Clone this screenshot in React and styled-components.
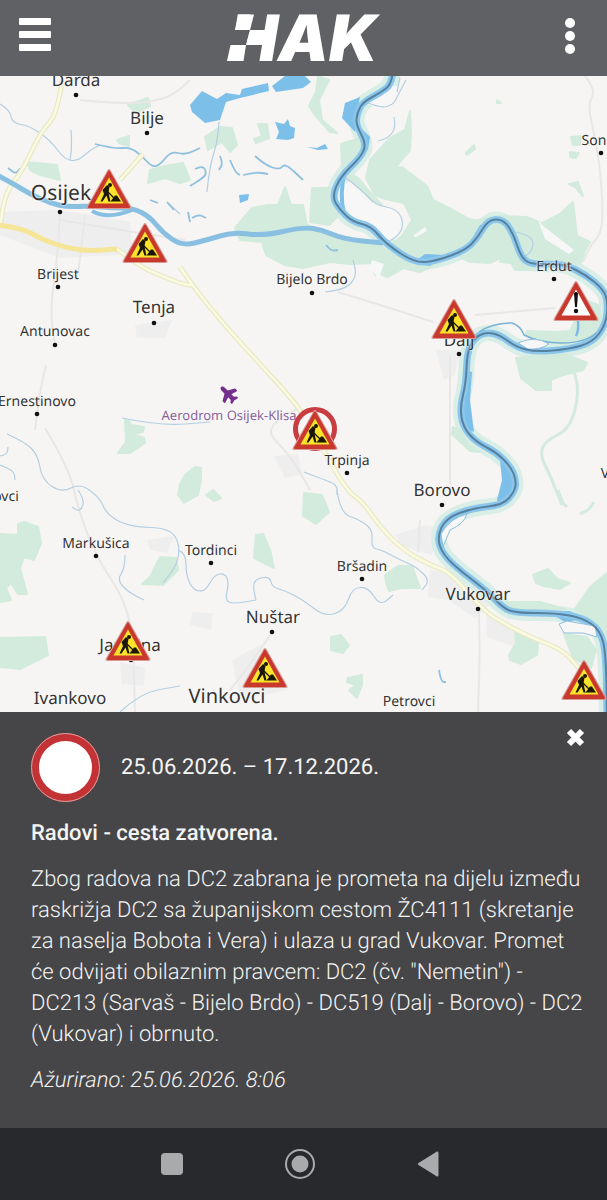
import React from 'react'
import styled, { createGlobalStyle } from 'styled-components'
import { FaPlane } from 'react-icons/fa'

const MAP = { top: 76, width: 607, height: 636 }

const GlobalStyle = createGlobalStyle`
    * {
        box-sizing: border-box;
    }
    body {
        margin: 0;
        background: #464648;
        font-family: Roboto, sans-serif;
        text-rendering: geometricPrecision;
    }
`

const Page = styled.div`
    display: flex;
    flex-direction: column;
    min-height: 100vh;
`

const IconButton = styled.button`
    display: flex;
    align-items: center;
    justify-content: center;
    padding: 0;
    border: 0;
    background: none;
    color: inherit;
    cursor: pointer;
`

const TopBar = styled.header`
    display: flex;
    align-items: center;
    justify-content: space-between;
    height: 76px;
    padding: 0 18px 4px;
    background: #606165;
    color: #fff;
`

const MapArea = styled.main`
    position: relative;
    width: 100%;
    aspect-ratio: ${MAP.width} / ${MAP.height};
    overflow: hidden;
    background: #f6f5f4;
`

const Terrain = styled.svg`
    display: block;
    width: 100%;
    height: 100%;
`

const spot = ({ $x, $y }) => ({
    style: {
        left: `${($x / MAP.width) * 100}%`,
        top: `${(($y - MAP.top) / MAP.height) * 100}%`,
    },
})

const Place = styled.span.attrs(spot)`
    position: absolute;
    transform: translate(-50%, -50%);
    font-family: 'Noto Sans', sans-serif;
    font-size: ${({ $size }) => $size}px;
    line-height: 24px;
    white-space: nowrap;
    color: ${({ $color }) => $color || '#333'};
    text-shadow: 0 0 2px #fff, 0 0 2px #fff;
`

const Marker = styled(IconButton).attrs(spot)`
    position: absolute;
    transform: translate(-50%, -50%);
`

const Airport = styled.span.attrs(spot)`
    position: absolute;
    display: flex;
    transform: translate(-50%, -50%) rotate(225deg);
    color: #73308a;
`

const Panel = styled.section`
    display: flex;
    flex: 1;
    flex-direction: column;
    padding: 12px 15px 32px 31px;
    background: #464648;
    color: #f4f4f4;
`

const PanelHead = styled.div`
    display: flex;
    align-items: flex-start;
    justify-content: space-between;
`

const Period = styled.div`
    display: flex;
    align-items: center;
    gap: 21px;
    padding-top: 9px;
    font-size: 22px;
    line-height: 30px;
`

const ClosedSign = styled.span`
    width: 69px;
    height: 69px;
    border: 8px solid #c33335;
    border-radius: 50%;
    outline: 1px solid #d8a3a3;
    outline-offset: -1px;
    background: #fff;
`

const Title = styled.h1`
    margin: 16px 0 0;
    font-size: 22px;
    font-weight: 500;
    line-height: 31px;
`

const Text = styled.p`
    margin: 15px 0 0;
    font-size: 22px;
    font-weight: 300;
    line-height: 31px;
`

const Updated = styled(Text)`
    font-style: italic;
`

const SystemBar = styled.nav`
    display: flex;
    align-items: center;
    justify-content: center;
    gap: 96px;
    height: 72px;
    padding-right: 7px;
    background: #28292d;
    color: #a9aaac;
`

const places = [
    { name: 'Darda', x: 76, y: 80, size: 17, dot: [76, 95] },
    { name: 'Bilje', x: 147, y: 118, size: 17, dot: [147, 133] },
    { name: 'Osijek', x: 61, y: 193, size: 21, dot: [60, 212] },
    { name: 'Brijest', x: 58, y: 275, size: 14, dot: [58, 287] },
    { name: 'Tenja', x: 154, y: 307, size: 17, dot: [154, 323] },
    { name: 'Antunovac', x: 55, y: 332, size: 14, dot: [55, 345] },
    { name: 'Bijelo Brdo', x: 312, y: 280, size: 14, dot: [312, 293] },
    { name: 'Erdut', x: 554, y: 267, size: 14, dot: [554, 279] },
    { name: 'Son', x: 594, y: 141, size: 14, dot: [601, 153] },
    { name: 'Dalj', x: 459, y: 340, size: 17, dot: [459, 354] },
    { name: 'Ernestinovo', x: 37, y: 402, size: 14, dot: [37, 414] },
    { name: 'Aerodrom Osijek-Klisa', x: 229, y: 415, size: 13, color: '#87619a' },
    { name: 'Trpinja', x: 347, y: 461, size: 14, dot: [347, 473] },
    { name: 'Borovo', x: 442, y: 490, size: 17, dot: [442, 505] },
    { name: 'ovci', x: 6, y: 497, size: 14 },
    { name: 'V', x: 605, y: 474, size: 14 },
    { name: 'Markušica', x: 96, y: 544, size: 14, dot: [96, 556] },
    { name: 'Tordinci', x: 211, y: 551, size: 14, dot: [211, 563] },
    { name: 'Bršadin', x: 362, y: 567, size: 14, dot: [362, 579] },
    { name: 'Vukovar', x: 478, y: 594, size: 17, dot: [478, 609] },
    { name: 'Nuštar', x: 273, y: 617, size: 17, dot: [272, 632] },
    { name: 'Jarmina', x: 130, y: 645, size: 17, dot: [131, 660] },
    { name: 'Ivankovo', x: 70, y: 698, size: 17 },
    { name: 'Vinkovci', x: 227, y: 696, size: 20 },
    { name: 'Petrovci', x: 409, y: 702, size: 14 },
]

const markers = [
    { x: 109, y: 189 },
    { x: 145, y: 243 },
    { x: 454, y: 319 },
    { x: 576, y: 301, kind: 'warning' },
    { x: 315, y: 430, kind: 'closed' },
    { x: 128, y: 641 },
    { x: 265, y: 668 },
    { x: 584, y: 680 },
]

const danube =
    '393,70 392,84 380,93 363,102 357,113 356,125 366,143 362,156 340,177 332,197 340,210 353,222 371,226 386,244 415,263 436,261 466,250 478,237 488,220 503,219 513,233 521,257 530,264 550,264 566,265 586,275 603,289 608,302 606,324 593,342 570,349 536,352 516,347 500,335 486,332 474,338 467,353 466,383 460,407 463,427 476,442 496,452 511,467 516,480 515,491 503,505 473,508 446,518 437,537 443,555 463,573 486,590 503,608 516,613 556,613 583,618 600,630 606,653 607,720'
const drava =
    '-5,174 12,183 30,194 50,203 67,207 90,206 112,208 133,208 150,217 163,233 182,246 207,240 233,232 263,236 303,227 323,230 343,239 383,243'

const forests = [
    '410,111 411,132 410,150 395,168 402,167 427,186 433,200 447,207 469,219 485,222 460,226 431,228 412,220 404,203 385,199 375,195 366,178 370,160 390,138 405,130',
    '388,246 402,236 412,220 436,225 458,225 486,218 500,216 526,217 540,222 554,236 576,250 586,256 580,264 552,262 530,270 515,270 507,255 490,263 470,262 455,255 420,272 402,268 388,250',
    '537,226 560,214 573,202 577,236 590,242 582,256 565,248',
    '252,208 268,205 278,205 285,187 291,205 303,205 307,225 340,236 380,244 402,269 388,277 375,275 372,263 350,264 330,262 303,268 285,265 266,255 262,242 240,240 235,228',
    '150,170 165,166 183,163 190,180 180,183 165,178 148,183',
    '27,162 57,165 60,180 40,175 30,170',
    '117,140 129,136 129,146 119,143',
    '128,105 148,98 150,106 136,113',
    '205,137 220,127 232,128 237,145 230,152 222,142 208,150',
    '258,124 267,124 269,138 256,143 254,139 262,136',
    '312,188 334,188 338,216 329,225 310,222',
    '341,144 363,137 362,156 346,170 358,178 368,190 382,205 372,199 353,183 342,168',
    '318,76 329,80 319,100 322,120 337,133 330,132 315,115 309,106 316,92',
    '125,420 129,421 131,425 144,427 143,432 133,434 144,438 145,443 130,453 118,453 126,442',
    '185,475 195,467 201,468 201,480 198,495 184,503 178,495 180,484',
    '206,495 213,490 221,498 214,501',
    '304,493 322,495 329,512 316,524 303,516',
    '0,534 18,535 18,524 24,522 38,527 41,543 34,560 24,557 20,568 27,594 18,594 11,583 6,588 11,600 0,602',
    '0,638 45,637 48,655 20,669 0,667',
    '160,557 176,558 178,570 163,585 142,584 150,577',
    '256,535 263,534 270,550 274,568 254,558',
    '385,575 398,566 412,566 420,588 401,588 389,591 386,583',
    '331,637 341,635 349,645 343,653 331,650',
    '348,678 362,675 362,685 357,698 349,690 356,685 347,682',
    '509,655 516,643 515,631 526,636 538,642 537,655 521,664 510,660',
    '516,358 535,356 565,354 587,363 583,370 560,376 551,380 551,390 536,390 521,378',
    '527,331 555,332 570,331 585,300 598,305 603,330 588,348 545,341 525,335',
    '590,587 607,573 607,640 596,622 575,609',
    '533,575 548,569 557,579 570,583 560,589 544,586 536,583',
    '564,634 587,637 596,650 591,668 573,658',
    '505,602 540,602 565,609 555,613 518,611',
    '453,427 460,430 468,445 480,452 470,451 452,434',
    '487,235 500,240 505,250 500,262 520,264 512,250 520,234',
    '497,100 501,103 497,103',
    '466,153 474,145 475,149 467,155',
    '571,137 581,136 580,145 573,145',
    '570,152 579,153 576,158 570,157',
    '569,184 578,182 583,196 575,187',
]

const fields = [
    '0,212 55,210 85,214 130,222 133,250 116,255 60,258 0,235',
    '135,325 172,320 165,338 137,338',
    '274,456 298,454 302,474 285,478',
    '395,535 426,525 439,528 432,555 404,547',
    '430,570 458,572 490,605 475,618 448,600 428,597',
    '486,615 503,620 520,638 515,647 487,637',
    '192,612 213,613 211,630 190,625',
    '147,540 174,536 167,553 150,550',
    '232,660 260,645 288,690 240,700',
    '120,662 145,668 144,686 122,684',
    '436,350 460,350 455,375 444,380',
]

const lakes = [
    '190,105 202,91 217,99 226,93 240,95 242,89 268,83 269,91 240,98 226,102 220,120 205,123 192,112',
    '272,86 285,76 305,76 311,82 303,88 276,92',
    '275,122 284,124 288,119 290,126 295,128 294,138 288,140 276,139 279,132',
    '239,195 249,194 248,200 240,203',
    '360,97 345,103 342,118 355,132 357,112',
    '362,129 370,137 368,150 362,148',
    '514,475 512,494 500,508 497,500 502,480 500,460',
    '413,263 425,254 446,255 430,266',
    '467,247 480,225 486,224 474,244',
    '548,612 565,622 583,619 570,611',
    '466,370 472,372 470,400 474,432 464,428 460,408',
    '307,147 317,148 325,144 328,149 318,150',
]

const streams = [
    '0,104 10,110 12,123 30,126 50,140 65,160 78,161 90,150 100,145',
    '70,160 72,150 71,130',
    '219,122 218,140 210,165 207,192',
    '366,102 380,108 393,105 398,95 406,80',
    '397,92 400,78',
    '394,117 396,128 388,138 378,141',
    '168,203 180,214',
    '7,434 25,442 38,455 42,480 62,493 80,483 100,498 107,515 130,527 170,528 180,545 177,565 163,583',
    '78,490 85,500 80,512 72,507',
    '0,456 7,455 8,447',
    '0,465 14,470 15,480',
    '178,550 186,553 186,575 193,590 205,592 214,575 225,573 229,583 225,600 233,604 256,600',
    '256,600 252,585 258,578 270,577 272,587 286,591 303,600 325,617 345,610 352,588 368,587 380,606 393,595',
    '125,555 125,568 117,580 128,592 144,600',
    '122,418 160,426 210,422',
    '337,490 340,513 360,520 373,530 371,548 382,550 400,560 415,566 430,580 422,590',
    '304,472 325,480 337,485 337,495',
    '120,712 140,693 180,686',
    '325,292 345,290 357,276 353,260',
    '516,232 533,236 533,250 523,258',
    '346,178 362,190 375,205 398,209 404,225 398,236 386,243',
]

const creeks = [
    '95,144 115,149 130,147 142,156 152,167 160,165 171,151 185,155 200,148',
    '195,169 203,165 207,174 200,180 190,186',
    '255,156 265,165 280,170 285,163 303,180',
    '220,156 223,163 219,170',
    '230,160 235,172 240,175',
    '243,175 255,172 268,174',
    '20,168 17,175 8,168',
    '192,218 198,214 206,218',
    '150,200 158,203',
    '167,202 174,210',
    '188,212 190,222',
    '439,670 441,682 446,682',
    '326,245 331,251 338,250',
]

const brooks = [
    '571,364 578,380 577,405 568,430 545,441 540,455 550,475 562,505',
    '558,490 562,502 567,507',
    '580,514 588,511 594,502',
]

const minorRoads = [
    '80,100 130,105 170,98 190,80',
    '585,76 596,90 588,104 593,130 600,165 604,230 590,246 583,262',
    '450,355 450,485',
    '46,365 40,390 35,430',
    '45,428 70,470 78,510 98,560 125,600 133,640 135,712',
    '479,608 480,650 478,712',
    '338,292 390,308 433,322',
    '475,315 555,308',
    '60,213 58,255 50,310 55,345',
    '85,215 78,275',
    '60,220 120,230 185,240',
    '272,632 250,665 230,690',
    '420,520 418,552',
    '300,408 260,425 290,455 310,490',
]

const highway = '-5,225 20,227 43,240 67,248 90,251 117,249'
const mainRoads = [
    '62,80 58,113 40,133 23,170 5,193 0,228',
    '117,249 140,267 167,278 185,285 193,285',
    '180,267 192,285 225,326 262,366 300,408 318,440 346,490 363,502 380,527 403,550 430,565 450,572 483,610 503,623 530,637 556,647 570,657 588,680',
    '143,154 120,180',
]

// rounds a list of points by running a curve through their midpoints
const smooth = (list) => {
    const pts = list.split(' ').map((p) => p.split(',').map(Number))
    const last = pts[pts.length - 1]
    const bends = pts.slice(1, -1).map(([x, y], i) => {
        const [nx, ny] = pts[i + 2]
        return `Q${x} ${y} ${(x + nx) / 2} ${(y + ny) / 2}`
    })
    return `M${pts[0].join(' ')} ${bends.join(' ')} L${last.join(' ')}`
}

const TerrainMap = () => (
    <Terrain viewBox={`0 ${MAP.top} ${MAP.width} ${MAP.height}`} preserveAspectRatio='none' aria-hidden='true'>
        <g fill='#efeeee'>
            {fields.map((f) => <polygon key={f} points={f}/>)}
        </g>
        <path d={smooth(danube)} fill='none' stroke='#d9eee6' strokeWidth='16'/>
        <g fill='#d2ebdd' stroke='#d2ebdd' strokeWidth='2' strokeLinejoin='round'>
            {forests.map((f) => <polygon key={f} points={f}/>)}
        </g>
        <g fill='#f8f7f8'>
            <path d='M345 181 Q365 198 376 207 L398 209 Q405 222 398 235 Q390 244 384 240 L374 225 Q350 222 339 206 Q336 188 345 181Z'/>
            <path d='M413 236 L425 227 427 231 416 237Z M537 217 L542 225 574 250 569 254 545 239Z'/>
            <path d='M366 103 Q380 110 392 106 L399 87 390 85Z'/>
            <path d='M372 260 L384 264 380 275 386 278 378 278 370 268Z'/>
        </g>
        <g fill='none' stroke='#e9e7e6' strokeWidth='2'>
            {minorRoads.map((r) => <path key={r} d={smooth(r)}/>)}
        </g>
        <g fill='none' stroke='#d5eadf' strokeWidth='3'>
            {brooks.map((r) => <path key={r} d={smooth(r)}/>)}
        </g>
        <g fill='none' stroke='#b3cfe2' strokeWidth='1.2'>
            {streams.map((r) => <path key={r} d={smooth(r)}/>)}
        </g>
        <g fill='none' stroke='#8fc0de' strokeWidth='1.8'>
            {creeks.map((r) => <path key={r} d={smooth(r)}/>)}
        </g>
        <g fill='none' stroke='#e8e9c3' strokeWidth='5'>
            {mainRoads.map((r) => <path key={r} d={smooth(r)}/>)}
        </g>
        <g fill='none' stroke='#fafae2' strokeWidth='2.6'>
            {mainRoads.map((r) => <path key={r} d={smooth(r)}/>)}
        </g>
        <path d={smooth(highway)} fill='none' stroke='#f5e596' strokeWidth='5'/>
        <g fill='#7cc0ea'>
            {lakes.map((l) => <polygon key={l} points={l}/>)}
        </g>
        <path d={smooth(drava)} fill='none' stroke='#89c0e2' strokeWidth='5'/>
        <path d='M92 211 Q108 220 132 210' fill='none' stroke='#89c0e2' strokeWidth='4'/>
        <path d='M345 171 Q339 195 344 213' fill='none' stroke='#7cc0ea' strokeWidth='4'/>
        <path d={smooth(danube)} fill='none' stroke='#8cc6ea' strokeWidth='7'/>
        <path d='M479 332 Q492 323 512 323 Q521 326 524 335 Q540 343 562 343 Q585 343 596 333' fill='none' stroke='#78b2d6' strokeWidth='1.5'/>
        <path d='M518 343 Q535 335 549 344 Q540 350 528 349Z M441 534 Q450 518 467 514 Q464 524 450 530 L443 547Z M559 624 L567 621 595 626 597 637 583 633 564 633Z' fill='#f8f7f8' stroke='#8dbfda' strokeWidth='1'/>
        <path d={smooth(danube)} fill='none' stroke='#5682a0' strokeWidth='2'/>
        <path d='M578 321 Q579 330 576 336' fill='none' stroke='#7cb9e4' strokeWidth='2.5'/>
        <g fill='#111'>
            {places.filter((p) => p.dot).map((p) => <circle key={p.name} cx={p.dot[0]} cy={p.dot[1]} r='2.3'/>)}
        </g>
    </Terrain>
)

const Sign = ({ kind }) => (
    <svg width='48' height='48' viewBox='0 0 48 48' aria-hidden='true'>
        {kind === 'closed' && (
            <circle cx='24' cy='23' r='19.5' fill='#f8f5f5' stroke='#c93c40' strokeWidth='5'/>
        )}
        <path d='M24 5.5 L45 42.5 H3Z' fill='#d79a95' stroke='#d79a95' strokeWidth='3' strokeLinejoin='round'/>
        <path d='M24 6.5 L44 42 H4Z' fill='#c9382d' stroke='#c9382d' strokeWidth='2' strokeLinejoin='round'/>
        <path d='M24 12.5 L38.5 38.5 H9.5Z' fill={kind === 'warning' ? '#fff' : '#fbe32b'}/>
        {kind === 'warning' ? (
            <g fill='#111'>
                <path d='M22 16 Q24 14 26 16 L25 30 H23Z'/>
                <circle cx='24' cy='34' r='2.2'/>
            </g>
        ) : (
            <g fill='#1b1605'>
                <circle cx='25' cy='20' r='2'/>
                <path d='M22 20 L24.500 22 23.500 27 24 30 25.500 36.500 23.500 36.500 21.500 30.5 17.500 36.5 15.500 36.5 19 29 17.500 25Z'/>
                <path d='M20 24 L24 28 29 33' fill='none' stroke='#1b1605' strokeWidth='1.2'/>
                <path d='M25.5 36.5 L30 30.5 32 30.5 36 36.5Z'/>
            </g>
        )}
    </svg>
)

const Logo = () => (
    <svg width='160' height='52' viewBox='0 0 160 52' overflow='visible' role='img' aria-label='HAK'>
        <text x='7' y='51' fill='#fff' fontFamily='Inter, sans-serif' fontSize='64' fontWeight='900' fontStyle='italic'>HAK</text>
        {/* chequered flag worked into the left side of the H */}
        <path d='M8 20 H27 L23 35 H4Z M31 4 H42 L38 20 H27Z M23 35 H36 L32 52 H20Z' fill='#606165'/>
        <path d='M15.500 4.500 H31 L27 20 H12Z M27 20 H47 L43 35 H23Z M7.500 35 H23 L20.500 51 H4Z' fill='#fff'/>
    </svg>
)

const labels = { warning: 'Opasnost', closed: 'Cesta zatvorena' }

const App = () => {
    return (
        <Page>
            <GlobalStyle/>
            <TopBar>
                <IconButton aria-label='Izbornik'>
                    <svg width='34' height='38' viewBox='0 0 34 38' fill='currentColor'>
                        <rect x='1' y='1' width='32' height='7' rx='1'/>
                        <rect x='1' y='14' width='32' height='7' rx='1'/>
                        <rect x='1' y='27' width='32' height='7' rx='1'/>
                    </svg>
                </IconButton>
                <Logo/>
                <IconButton aria-label='Više'>
                    <svg width='36' height='38' viewBox='0 0 36 38' fill='currentColor'>
                        <circle cx='17' cy='6' r='5'/>
                        <circle cx='17' cy='19' r='5'/>
                        <circle cx='17' cy='32' r='5'/>
                    </svg>
                </IconButton>
            </TopBar>
            <MapArea>
                <TerrainMap/>
                {places.map((p) => (
                    <Place key={p.name} $x={p.x} $y={p.y} $size={p.size} $color={p.color}>{p.name}</Place>
                ))}
                <Airport $x={228} $y={394}>
                    <FaPlane size={20}/>
                </Airport>
                {markers.map((m) => (
                    <Marker key={m.x} $x={m.x} $y={m.y} aria-label={labels[m.kind] || 'Radovi'}>
                        <Sign kind={m.kind}/>
                    </Marker>
                ))}
            </MapArea>
            <Panel>
                <PanelHead>
                    <Period>
                        <ClosedSign/>
                        25.06.2026. – 17.12.2026.
                    </Period>
                    <IconButton aria-label='Zatvori'>
                        <svg width='32' height='28' viewBox='0 0 32 28'>
                            <path d='M9 7 L22 20 M22 7 L9 20' stroke='#fff' strokeWidth='6'/>
                        </svg>
                    </IconButton>
                </PanelHead>
                <Title>Radovi - cesta zatvorena.</Title>
                <Text>
                    Zbog radova na DC2 zabrana je prometa na dijelu između raskrižja DC2 sa županijskom
                    cestom ŽC4111 (skretanje za naselja Bobota i Vera) i ulaza u grad Vukovar. Promet će
                    odvijati obilaznim pravcem: DC2 (čv. "Nemetin") - DC213 (Sarvaš - Bijelo Brdo) -
                    DC519 (Dalj - Borovo) - DC2 (Vukovar) i obrnuto.
                </Text>
                <Updated>Ažurirano: 25.06.2026. 8:06</Updated>
            </Panel>
            <SystemBar>
                <IconButton aria-label='Nedavno'>
                    <svg width='32' height='32' viewBox='0 0 32 32' fill='currentColor'>
                        <rect x='5' y='5' width='22' height='22' rx='4'/>
                    </svg>
                </IconButton>
                <IconButton aria-label='Početna'>
                    <svg width='32' height='32' viewBox='0 0 32 32' fill='currentColor'>
                        <circle cx='16' cy='16' r='14' fill='none' stroke='currentColor' strokeWidth='2'/>
                        <circle cx='16' cy='16' r='8.5'/>
                    </svg>
                </IconButton>
                <IconButton aria-label='Natrag'>
                    <svg width='32' height='32' viewBox='0 0 32 32' fill='currentColor'>
                        <path d='M6.5 15 L25 3.5 Q26.5 3 26.5 5 V27 Q26.5 29 25 28.5 L6.5 17 Q5 16 6.5 15Z'/>
                    </svg>
                </IconButton>
            </SystemBar>
        </Page>
    )
}

export default App
